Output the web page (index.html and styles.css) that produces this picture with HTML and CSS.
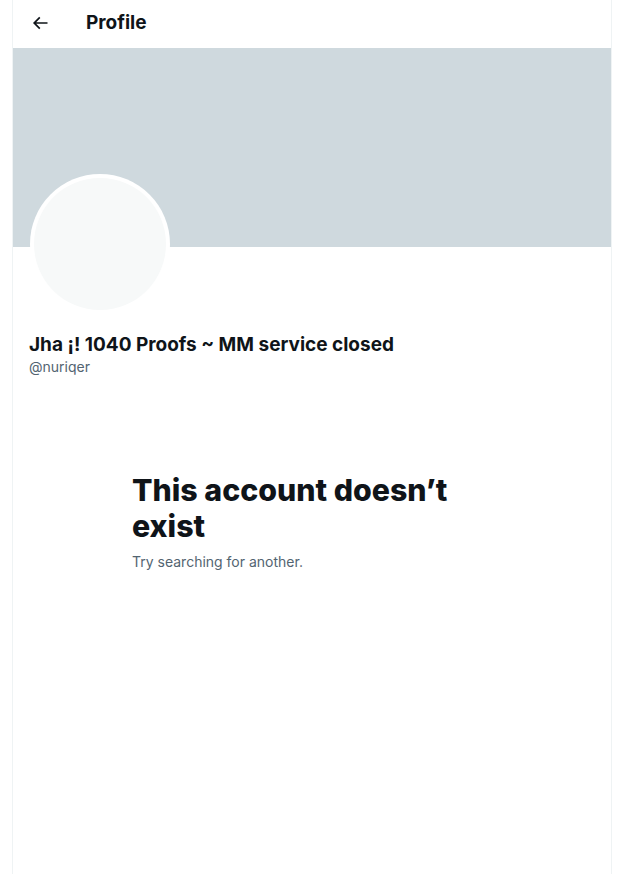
FILE: index.html
```html
<!DOCTYPE html>
<html lang="en">
<head>
<meta charset="utf-8">
<title>Profile</title>
<link rel="stylesheet" href="styles.css">
</head>
<body>
<main class="column">
  <header class="topbar">
    <div class="back">
      <svg viewBox="0 0 24 24" class="back-icon" aria-hidden="true"><path d="M7.414 13l5.043 5.04-1.414 1.42L3.586 12l7.457-7.46 1.414 1.42L7.414 11H21v2H7.414z"/></svg>
    </div>
    <h2 class="title">Profile</h2>
  </header>
  <div class="banner"></div>
  <section class="profile">
    <div class="avatar"><div class="avatar-inner"></div></div>
    <div class="name">Jha ¡! 1040 Proofs ~ MM service closed</div>
    <div class="handle">@nuriqer</div>
  </section>
  <section class="empty">
    <div class="empty-box">
      <h1 class="empty-title">This account doesn’t exist</h1>
      <p class="empty-sub">Try searching for another.</p>
    </div>
  </section>
</main>
</body>
</html>
```
FILE: styles.css
```css
html, body {
  margin: 0;
  padding: 0;
  background: #ffffff;
}
body {
  font-family: Inter, "Noto Sans", "Liberation Sans", sans-serif;
  color: #0f1419;
}
.column {
  width: 598px;
  margin-left: 12px;
  min-height: 874px;
  border-left: 1px solid #eff3f4;
  border-right: 1px solid #eff3f4;
  box-sizing: content-box;
}
.topbar {
  height: 48px;
  display: flex;
  align-items: center;
  padding-bottom: 3px;
  box-sizing: border-box;
}
.back {
  padding-left: 17px;
  width: 20px;
  margin-right: 36px;
  display: flex;
  align-items: center;
}
.back-icon {
  width: 20px;
  height: 20px;
  fill: #0f1419;
}
.title {
  margin: 0;
  font-size: 19px;
  font-weight: 700;
  line-height: 24px;
}
.banner {
  height: 199px;
  background: #cfd9de;
}
.profile {
  padding: 0 16px 0 17px;
}
.avatar {
  width: 140px;
  height: 140px;
  border-radius: 50%;
  background: #ffffff;
  margin-top: -73px;
  padding: 4px;
  box-sizing: border-box;
}
.avatar-inner {
  width: 100%;
  height: 100%;
  border-radius: 50%;
  background: #f7f9f9;
}
.name {
  margin-top: 19px;
  margin-left: -1px;
  font-size: 19px;
  font-weight: 700;
  line-height: 24px;
}
.handle {
  margin-left: -1px;
  font-size: 14px;
  line-height: 20px;
  color: #536471;
}
.empty {
  padding-top: 95px;
  display: flex;
  justify-content: center;
}
.empty-box {
  width: 336px;
  margin-left: -24px;
}
.empty-title {
  margin: 0 0 8px 0;
  font-size: 30.3px;
  font-weight: 800;
  line-height: 36px;
}
.empty-sub {
  margin: 0;
  font-size: 14px;
  line-height: 20px;
  color: #536471;
}
```
